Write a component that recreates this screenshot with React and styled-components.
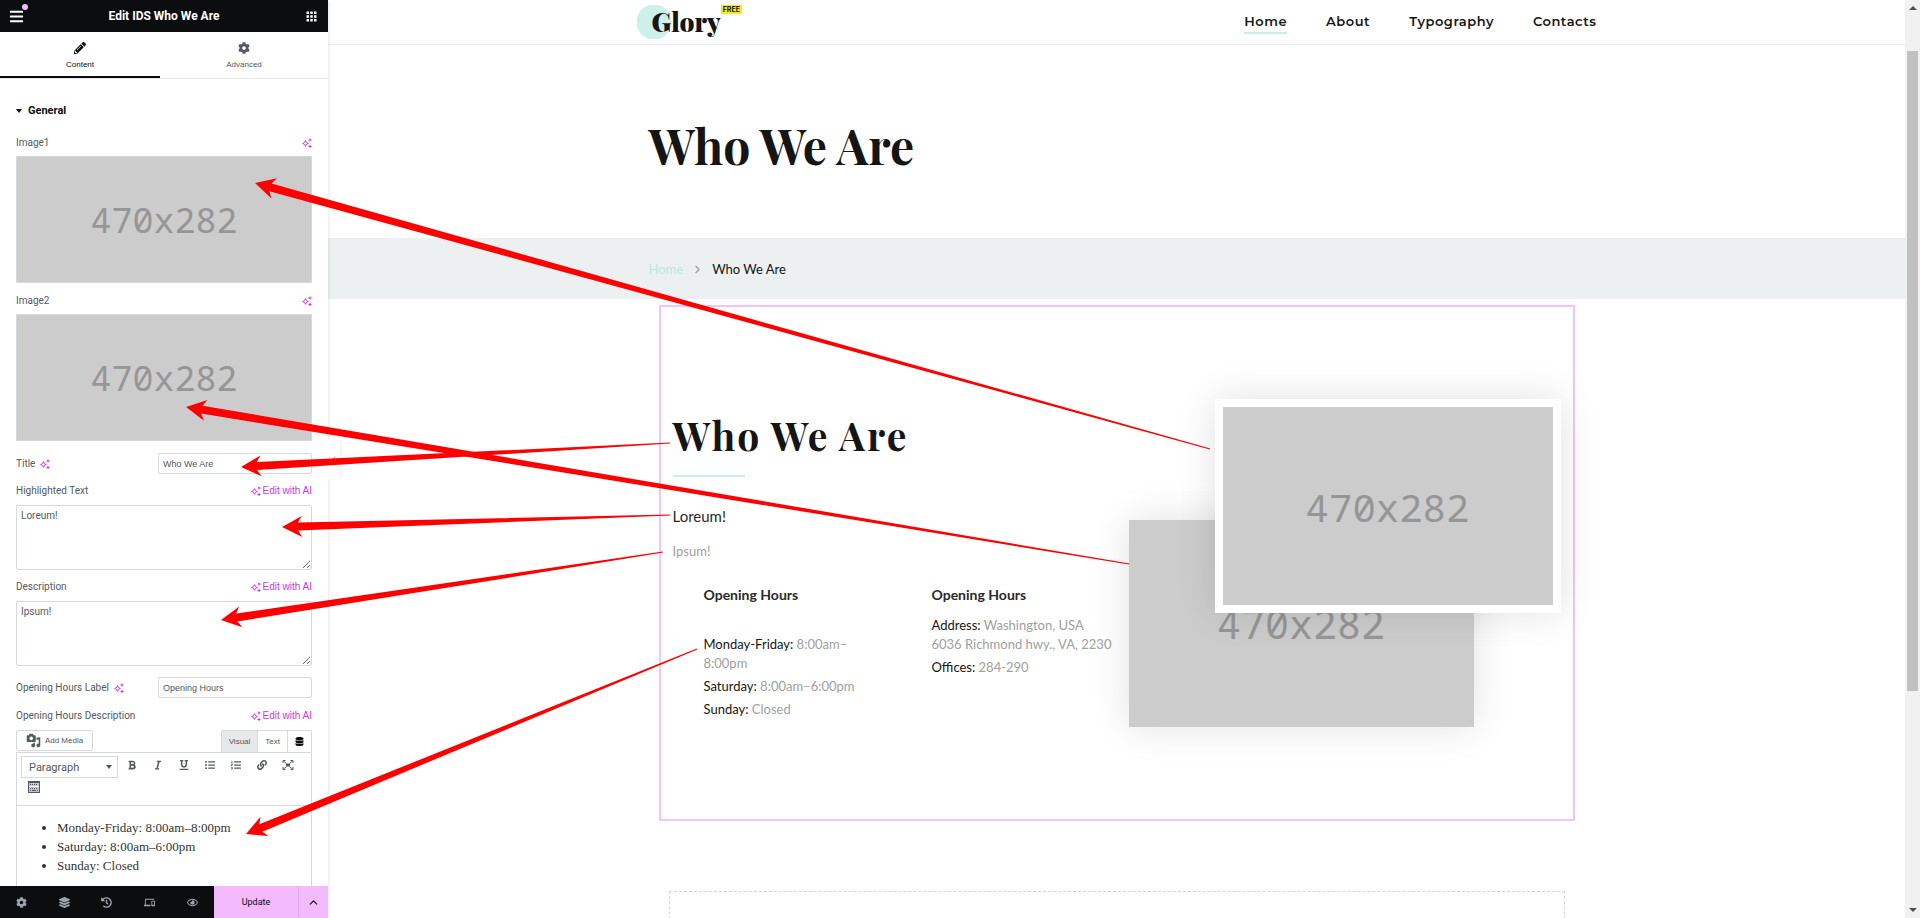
import React, { useState } from 'react';
import styled, { createGlobalStyle } from 'styled-components';
import {
  FaBars,
  FaBold,
  FaCog,
  FaDatabase,
  FaHistory,
  FaItalic,
  FaLayerGroup,
  FaLink,
  FaListOl,
  FaListUl,
  FaPencilAlt,
  FaRegEye,
  FaUnderline,
} from 'react-icons/fa';
import { MdApps, MdDevices } from 'react-icons/md';
import { LuChevronUp, LuChevronRight, LuChevronLeft } from 'react-icons/lu';

const arrows = [
  { from: [1210, 449], to: [255, 183] },
  { from: [1129, 564], to: [186, 407] },
  { from: [670, 443], to: [241, 467] },
  { from: [670, 515], to: [282, 527] },
  { from: [663, 552], to: [221, 620] },
  { from: [697, 649], to: [246, 834] },
];

// tapered arrow: wide at the head, a hairline at the tail
const arrowPoints = ({ from, to }) => {
  const dx = from[0] - to[0];
  const dy = from[1] - to[1];
  const len = Math.hypot(dx, dy);
  const at = (along, side) => [
    to[0] + (dx * along - dy * side) / len,
    to[1] + (dy * along + dx * side) / len,
  ];
  return [
    at(0, 0),
    at(20, -10.5),
    at(16, -4),
    at(len, -0.6),
    at(len, 0.6),
    at(16, 4),
    at(20, 10.5),
  ]
    .map((p) => p.join(','))
    .join(' ');
};

const Sparkle = () => (
  <SparkleSvg viewBox='0 0 10 10' aria-hidden='true'>
    <path
      d='M3.5 2.6 L4.4 4.6 L6.4 5.5 L4.4 6.4 L3.5 8.4 L2.6 6.4 L0.6 5.5 L2.6 4.6 Z'
      fill='none'
      stroke='currentColor'
      strokeWidth='1'
    />
    <path d='M8 0.5v3M6.5 2h3M8 7v3M6.5 8.5h3' stroke='currentColor' />
  </SparkleSvg>
);

const MediaIcon = () => (
  <svg viewBox='0 0 20 20' width='15' height='15' fill='currentColor' aria-hidden='true'>
    <path d='M13 11V4c0-.55-.45-1-1-1h-1.67L9 1H5L3.67 3H2c-.55 0-1 .45-1 1v7c0 .55.45 1 1 1h10c.55 0 1-.45 1-1zM7 4.500c1.380 0 2.500 1.120 2.500 2.500S8.380 9.500 7 9.500 4.500 8.380 4.500 7 5.620 4.500 7 4.500zM14 6h5v10.500c0 1.380-1.120 2.500-2.500 2.500S14 17.880 14 16.500s1.120-2.500 2.500-2.500c.17 0 .34.02.5.05V9h-3V6zm-4 8.050V13h2v3.500c0 1.380-1.120 2.500-2.500 2.500S7 17.880 7 16.500 8.120 14 9.500 14c.17 0 .34.02.5.05z' />
  </svg>
);

const FullscreenIcon = () => (
  <svg viewBox='0 0 12 12' fill='none' stroke='currentColor' aria-hidden='true'>
    <path d='M1 4V1.500H3.500M8.500 1.500H11V4M11 8V10.500H8.500M3.500 10.500H1V8' />
    <path d='M1.500 2L4.500 4.500M10.500 2L7.500 4.500M1.500 10L4.500 7.500M10.500 10L7.500 7.500' />
    <path d='M4 6h4' strokeWidth='3' />
  </svg>
);

const KeyboardIcon = () => (
  <svg viewBox='0 0 12 12' fill='none' stroke='currentColor' aria-hidden='true'>
    <rect x='0.5' y='0.5' width='11' height='11' fill='#c3c7cb' />
    <path d='M0 1.500h12' />
    <path d='M2 3.500h8' strokeDasharray='1 1' />
    <path d='M1 5.500h10' stroke='#fff' />
    <path d='M2 7.500h8' strokeDasharray='1 1' />
    <path d='M2 9.500h1M4 9.500h4M9 9.500h1' />
  </svg>
);

const Placeholder = ({ size }) => (
  <PlaceholderBox $size={size}>470x282</PlaceholderBox>
);

const ImageControl = ({ label }) => (
  <ImageField>
    <FieldHead>
      <span>{label}</span>
      <AiButton type='button' aria-label={`Generate ${label} with AI`}>
        <Sparkle />
      </AiButton>
    </FieldHead>
    <Thumb>
      <Placeholder size={35} />
    </Thumb>
  </ImageField>
);

const TextControl = ({ id, label, value, onChange }) => (
  <InlineField>
    <label htmlFor={id}>{label}</label>
    <AiButton type='button' aria-label={`Write ${label} with AI`}>
      <Sparkle />
    </AiButton>
    <Input id={id} type='text' value={value} onChange={onChange} />
  </InlineField>
);

const AreaControl = ({ id, label, value, onChange }) => (
  <AreaField>
    <FieldHead>
      <label htmlFor={id}>{label}</label>
      <AiButton type='button'>
        <Sparkle />
        Edit with AI
      </AiButton>
    </FieldHead>
    <TextArea id={id} value={value} onChange={onChange} />
  </AreaField>
);

const Editor = () => (
  <EditorField>
    <FieldHead>
      <span>Opening Hours Description</span>
      <AiButton type='button'>
        <Sparkle />
        Edit with AI
      </AiButton>
    </FieldHead>
    <EditorTop>
      <MediaButton type='button'>
        <MediaIcon />
        Add Media
      </MediaButton>
      <EditorTabs>
        <EditorTab type='button' $active>
          Visual
        </EditorTab>
        <EditorTab type='button'>Text</EditorTab>
        <EditorTab type='button' aria-label='Dynamic tags'>
          <FaDatabase />
        </EditorTab>
      </EditorTabs>
    </EditorTop>
    <EditorBox>
      <Toolbar>
        <Format>
          <FormatSelect aria-label='Format' defaultValue='Paragraph'>
            <option>Paragraph</option>
            <option>Heading 1</option>
            <option>Heading 2</option>
          </FormatSelect>
          <Caret />
        </Format>
        <Tool type='button' aria-label='Bold'>
          <FaBold />
        </Tool>
        <Tool type='button' aria-label='Italic'>
          <FaItalic />
        </Tool>
        <Tool type='button' aria-label='Underline'>
          <FaUnderline />
        </Tool>
        <Tool type='button' aria-label='Bulleted list'>
          <FaListUl />
        </Tool>
        <Tool type='button' aria-label='Numbered list'>
          <FaListOl />
        </Tool>
        <Tool type='button' aria-label='Link'>
          <FaLink />
        </Tool>
        <Tool type='button' aria-label='Fullscreen'>
          <FullscreenIcon />
        </Tool>
        <Tool type='button' aria-label='Toolbar toggle'>
          <KeyboardIcon />
        </Tool>
      </Toolbar>
      <EditorList>
        <li>Monday-Friday: 8:00am–8:00pm</li>
        <li>Saturday: 8:00am–6:00pm</li>
        <li>Sunday: Closed</li>
      </EditorList>
    </EditorBox>
  </EditorField>
);

const App = () => {
  const [title, setTitle] = useState('Who We Are');
  const [highlight, setHighlight] = useState('Loreum!');
  const [description, setDescription] = useState('Ipsum!');
  const [hoursLabel, setHoursLabel] = useState('Opening Hours');

  return (
    <>
      <GlobalStyle />
      <Wrapper>
        <Panel>
          <PanelHeader>
            <HeaderButton type='button' aria-label='Menu'>
              <FaBars />
              <Dot />
            </HeaderButton>
            <PanelTitle>Edit IDS Who We Are</PanelTitle>
            <HeaderButton type='button' aria-label='Widgets'>
              <MdApps />
            </HeaderButton>
          </PanelHeader>
          <Tabs>
            <Tab type='button' $active>
              <FaPencilAlt />
              Content
            </Tab>
            <Tab type='button'>
              <FaCog />
              Advanced
            </Tab>
          </Tabs>
          <Controls>
            <SectionTitle>
              <Caret />
              General
            </SectionTitle>
            <ImageControl label='Image1' />
            <ImageControl label='Image2' />
            <TextControl
              id='title'
              label='Title'
              value={title}
              onChange={(e) => setTitle(e.target.value)}
            />
            <AreaControl
              id='highlight'
              label='Highlighted Text'
              value={highlight}
              onChange={(e) => setHighlight(e.target.value)}
            />
            <AreaControl
              id='description'
              label='Description'
              value={description}
              onChange={(e) => setDescription(e.target.value)}
            />
            <TextControl
              id='hours'
              label='Opening Hours Label'
              value={hoursLabel}
              onChange={(e) => setHoursLabel(e.target.value)}
            />
            <Editor />
          </Controls>
          <PanelFooter>
            <FooterTools>
              <FooterButton type='button' aria-label='Settings'>
                <FaCog />
              </FooterButton>
              <FooterButton type='button' aria-label='Navigator'>
                <FaLayerGroup />
              </FooterButton>
              <FooterButton type='button' aria-label='History'>
                <FaHistory />
              </FooterButton>
              <FooterButton type='button' aria-label='Responsive mode'>
                <MdDevices />
              </FooterButton>
              <FooterButton type='button' aria-label='Preview'>
                <FaRegEye />
              </FooterButton>
            </FooterTools>
            <UpdateButton type='button'>Update</UpdateButton>
            <MoreButton type='button' aria-label='Save options'>
              <LuChevronUp />
            </MoreButton>
          </PanelFooter>
          <Collapse type='button' aria-label='Hide panel'>
            <LuChevronLeft />
          </Collapse>
        </Panel>

        <Preview>
          <SiteHeader>
            <SiteHeaderInner>
              <Logo href='#'>
                <LogoText>Glory</LogoText>
                <Free>FREE</Free>
              </Logo>
              <Nav>
                <NavLink href='#' $active>
                  Home
                </NavLink>
                <NavLink href='#'>About</NavLink>
                <NavLink href='#'>Typography</NavLink>
                <NavLink href='#'>Contacts</NavLink>
              </Nav>
            </SiteHeaderInner>
          </SiteHeader>
          <Hero>
            <Container>
              <PageTitle>Who We Are</PageTitle>
            </Container>
          </Hero>
          <Crumbs>
            <CrumbRow>
              <CrumbLink href='#'>Home</CrumbLink>
              <LuChevronRight />
              <span>Who We Are</span>
            </CrumbRow>
          </Crumbs>
          <Widget>
            <Copy>
              <Heading>{title}</Heading>
              <Highlight>{highlight}</Highlight>
              <Text>{description}</Text>
              <Columns>
                <div>
                  <ColumnTitle>{hoursLabel}</ColumnTitle>
                  <Hours $offset>
                    <li>
                      <b>Monday-Friday:</b> 8:00am–8:00pm
                    </li>
                    <li>
                      <b>Saturday:</b> 8:00am–6:00pm
                    </li>
                    <li>
                      <b>Sunday:</b> Closed
                    </li>
                  </Hours>
                </div>
                <div>
                  <ColumnTitle>{hoursLabel}</ColumnTitle>
                  <Hours>
                    <li>
                      <b>Address:</b> Washington, USA
                      <br />
                      6036 Richmond hwy., VA, 2230
                    </li>
                    <li>
                      <b>Offices:</b> 284-290
                    </li>
                  </Hours>
                </div>
              </Columns>
            </Copy>
            <Pictures>
              <BackPicture>
                <Placeholder size={40} />
              </BackPicture>
              <FrontPicture>
                <Placeholder size={39} />
              </FrontPicture>
            </Pictures>
          </Widget>
          <DropArea />
        </Preview>

        <Scrollbar aria-hidden='true'>
          <ScrollArrow />
          <ScrollThumb />
          <ScrollArrow $down />
        </Scrollbar>

        <Arrows aria-hidden='true'>
          {arrows.map((arrow) => (
            <polygon key={arrow.to.join()} points={arrowPoints(arrow)} />
          ))}
        </Arrows>
      </Wrapper>
    </>
  );
};

const GlobalStyle = createGlobalStyle`
  * {
    box-sizing: border-box;
  }

  body {
    margin: 0;
    background: #fff;
    overflow: hidden;
  }

  button {
    display: flex;
    align-items: center;
    justify-content: center;
    margin: 0;
    padding: 0;
    border: 0;
    background: none;
    color: inherit;
    font: inherit;
    cursor: pointer;
  }

  a {
    color: inherit;
    text-decoration: none;
  }
`;

const Wrapper = styled.div`
  position: relative;
  display: flex;
  height: 100vh;
  overflow: hidden;
`;

const Panel = styled.aside`
  position: relative;
  display: flex;
  flex-direction: column;
  flex: none;
  width: 328px;
  background: #fff;
  color: #515962;
  font: 10px/14px Roboto, 'Liberation Sans', sans-serif;
  box-shadow: 0 0 4px rgba(0, 0, 0, 0.15);
`;

const PanelHeader = styled.header`
  display: flex;
  align-items: center;
  justify-content: space-between;
  flex: none;
  height: 32px;
  padding: 0 8px;
  background: #0c0d0e;
  color: #fff;
`;

const HeaderButton = styled.button`
  position: relative;
  width: 16px;
  height: 32px;
  font-size: 15px;
`;

const Dot = styled.span`
  position: absolute;
  top: 4px;
  right: -4px;
  width: 6px;
  height: 6px;
  border-radius: 50%;
  background: #f3bafd;
`;

const PanelTitle = styled.h1`
  margin: 0;
  font-size: 12px;
  font-weight: 700;
`;

const Tabs = styled.div`
  display: grid;
  grid-template-columns: 160fr 168fr;
  flex: none;
  height: 47px;
  border-bottom: 1px solid #e6e8ea;
`;

const Tab = styled.button`
  flex-direction: column;
  gap: 4px;
  padding-top: 5px;
  border-bottom: 2px solid ${(props) => (props.$active ? '#0c0d0e' : 'transparent')};
  color: ${(props) => (props.$active ? '#0c0d0e' : '#515962')};
  font: 8px/14px 'Liberation Sans', Arial, sans-serif;

  svg {
    font-size: 12px;
  }
`;

const Controls = styled.div`
  flex: 1;
  min-height: 0;
  padding: 25px 16px 0;
  overflow: hidden;
`;

const SectionTitle = styled.h2`
  display: flex;
  align-items: center;
  gap: 6px;
  margin: 0 0 18px;
  color: #0c0d0e;
  font-size: 11px;
  font-weight: 700;
  line-height: 14px;
`;

const Caret = styled.span`
  align-self: center;
  border: 3px solid transparent;
  border-top: 4px solid currentColor;
  border-bottom: 0;
  pointer-events: none;
`;

const FieldHead = styled.div`
  display: flex;
  align-items: center;
  justify-content: space-between;
  height: 14px;
`;

const SparkleSvg = styled.svg`
  width: 10px;
  height: 10px;
`;

const AiButton = styled.button`
  gap: 2px;
  color: #d334e0;
  font: 10px/14px 'Liberation Sans', Arial, sans-serif;
`;

const ImageField = styled.div`
  margin-bottom: 11px;
`;

const Thumb = styled.div`
  display: flex;
  height: 127px;
  margin-top: 6px;
  border: 1px solid #d5d8dc;
`;

const PlaceholderBox = styled.div`
  display: flex;
  align-items: center;
  justify-content: center;
  width: 100%;
  height: 100%;
  background: #ccc;
  color: #969696;
  font-family: 'Noto Sans Mono', 'DejaVu Sans Mono', monospace;
  font-size: ${(props) => props.$size}px;
  line-height: 1;
`;

const InlineField = styled.div`
  display: flex;
  align-items: center;
  gap: 5px;
  margin-bottom: 10px;
  padding-top: 1px;
`;

const Input = styled.input`
  width: 154px;
  height: 21px;
  margin-left: auto;
  padding: 0 4px;
  border: 1px solid #d5d8dc;
  border-radius: 2px;
  background: #fff;
  color: #515962;
  font: 9px 'Liberation Sans', Arial, sans-serif;
`;

const AreaField = styled.div`
  margin-bottom: 10px;
`;

const TextArea = styled.textarea`
  display: block;
  width: 100%;
  height: 65px;
  margin-top: 7px;
  padding: 3px 4px;
  border: 1px solid #d5d8dc;
  border-radius: 2px;
  background: #fff;
  color: #515962;
  font: 10px/14px Roboto, sans-serif;
  resize: vertical;
`;

const EditorField = styled.div`
  padding-top: 1px;
`;

const EditorTop = styled.div`
  display: flex;
  align-items: flex-start;
  justify-content: space-between;
  margin-top: 7px;
  font: 8px/14px 'Liberation Sans', Arial, sans-serif;
`;

const MediaButton = styled.button`
  gap: 4px;
  width: 77px;
  height: 21px;
  border: 1px solid #d5d8dc;
  border-radius: 2px;
`;

const EditorTabs = styled.div`
  display: flex;
  border: 1px solid #d5d8dc;
  border-bottom: 0;
  border-radius: 2px 2px 0 0;
`;

const EditorTab = styled.button`
  height: 21px;
  padding: 0 7px;
  background: ${(props) => (props.$active ? '#e6e8ea' : '#fff')};

  & + & {
    border-left: 1px solid #d5d8dc;
  }

  svg {
    color: #0c0d0e;
    font-size: 9px;
  }
`;

const EditorBox = styled.div`
  height: 300px;
  border: 1px solid #d5d8dc;
`;

const Toolbar = styled.div`
  display: flex;
  flex-wrap: wrap;
  align-items: flex-start;
  align-content: flex-start;
  height: 53px;
  padding: 3px 4px;
  border-bottom: 1px solid #d5d8dc;
`;

const Format = styled.div`
  display: grid;
  grid-template-columns: 1fr 12px;
  width: 97px;
  height: 22px;
  margin-right: 1px;

  & > * {
    grid-row: 1;
  }
`;

const FormatSelect = styled.select`
  grid-column: 1 / 3;
  padding: 0 7px;
  border: 1px solid #d5d8dc;
  border-radius: 0;
  background: #fff;
  color: #515962;
  font: 11px Roboto, sans-serif;
  appearance: none;

  & + span {
    grid-column: 2;
    justify-self: start;
  }
`;

const Tool = styled.button`
  width: 26px;
  height: 18px;
  font-size: 10px;

  svg {
    width: 1em;
    height: 1em;
  }

  &:nth-child(n + 8) svg {
    width: 12px;
    height: 12px;
  }
`;

const EditorList = styled.ul`
  margin: 12px 0 0;
  padding-left: 40px;
  color: #333;
  font: 13px/19px 'Liberation Serif', 'Times New Roman', serif;
`;

const PanelFooter = styled.footer`
  display: flex;
  flex: none;
  height: 32px;
  background: #0c0d0e;
`;

const FooterTools = styled.div`
  display: flex;
  flex: 1;
  color: #9da5ae;
`;

const FooterButton = styled.button`
  flex: 1;
  font-size: 11px;
`;

const UpdateButton = styled.button`
  width: 84px;
  background: #f3bafd;
  color: #0c0d0e;
  font-size: 9px;
`;

const MoreButton = styled.button`
  width: 30px;
  border-left: 1px solid #e3a8f0;
  background: #f3bafd;
  color: #0c0d0e;
  font-size: 13px;
`;

const Collapse = styled.button`
  position: absolute;
  top: 439px;
  left: 100%;
  width: 12px;
  height: 40px;
  border-radius: 0 3px 3px 0;
  background: #fff;
  box-shadow: 2px 0 3px rgba(0, 0, 0, 0.06);
  font-size: 8px;
`;

const Preview = styled.main`
  flex: 1;
  min-width: 0;
  overflow: hidden;
  background: #fff;
  color: #151515;
  font-family: Lato, sans-serif;
  font-size: 13px;
`;

const SiteHeader = styled.header`
  height: 45px;
  border-bottom: 1px solid #ebebeb;
`;

const SiteHeaderInner = styled.div`
  display: flex;
  align-items: center;
  justify-content: space-between;
  max-width: 960px;
  height: 44px;
  margin: 0 auto;
`;

const Logo = styled.a`
  display: flex;
  align-items: flex-start;
  height: 34px;
  padding-left: 15px;
  background: radial-gradient(circle at 17px 17px, #cdf1e8 17px, transparent 18px);
`;

const LogoText = styled.span`
  color: #151515;
  font: 900 26px/34px 'Playfair Display', 'Liberation Serif', serif;
`;

const Free = styled.span`
  padding: 0 2px;
  background: #f6e91f;
  font: 700 7px/9px Inter, sans-serif;
`;

const Nav = styled.nav`
  display: flex;
  gap: 39px;
`;

const NavLink = styled.a`
  border-bottom: 2px solid ${(props) => (props.$active ? '#c5f0e5' : 'transparent')};
  font: 600 13px/22px Montserrat, Inter, sans-serif;
  letter-spacing: 0.04em;
`;

const Container = styled.div`
  max-width: 936px;
  margin: 0 auto;
`;

const Hero = styled.section`
  padding: 72px 0 65px;
`;

const PageTitle = styled.h1`
  margin: 0;
  font: 700 48px/56px 'Playfair Display', 'Liberation Serif', serif;
`;

const Crumbs = styled.div`
  padding: 21px 0 19px;
  background: #ecf0f1;
`;

const CrumbRow = styled(Container)`
  display: flex;
  align-items: center;
  gap: 8px;
  line-height: 21px;

  svg {
    color: #999;
    font-size: 13px;
  }
`;

const CrumbLink = styled.a`
  color: #b5ebdd;
`;

const Widget = styled.section`
  display: flex;
  align-items: flex-start;
  max-width: 916px;
  min-height: 516px;
  margin: 6px auto 0;
  padding: 92px 12px 0;
  border: 2px solid #f2c4fb;
`;

const Copy = styled.div`
  flex: 1;
  padding-top: 10px;
`;

const Heading = styled.h2`
  margin: 0;
  font: 700 39px/52px 'Playfair Display', 'Liberation Serif', serif;
  letter-spacing: 2px;

  &::after {
    content: '';
    display: block;
    width: 72px;
    height: 2px;
    margin-top: 14px;
    background: #c5f0e5;
  }
`;

const Highlight = styled.p`
  margin: 29px 0 0;
  color: #292929;
  font-size: 15px;
  line-height: 20px;
`;

const Text = styled.p`
  margin: 15px 0 0;
  color: #a0a0a0;
  line-height: 20px;
`;

const Columns = styled.div`
  display: grid;
  grid-template-columns: 1fr 1fr;
  column-gap: 48px;
  margin: 24px 0 0 31px;
  padding-right: 17px;
`;

const ColumnTitle = styled.h3`
  margin: 0 0 11px;
  color: #292929;
  font-size: 14px;
  font-weight: 700;
  line-height: 20px;
`;

const Hours = styled.ul`
  margin: 0;
  padding: ${(props) => (props.$offset ? '19px 0 0' : '0')};
  color: #a0a0a0;
  line-height: 19px;
  list-style: none;

  li {
    margin-bottom: 4px;
  }

  b {
    color: #151515;
    font-weight: 400;
  }
`;

const Pictures = styled.div`
  display: grid;
  flex: none;
  width: 432px;
  height: 328px;

  & > * {
    grid-area: 1 / 1;
    box-shadow: 0 0 36px rgba(0, 0, 0, 0.12);
  }
`;

const BackPicture = styled.div`
  align-self: end;
  width: 345px;
  height: 207px;
`;

const FrontPicture = styled.div`
  justify-self: end;
  width: 346px;
  height: 214px;
  padding: 8px;
  background: #fff;
`;

const DropArea = styled.div`
  max-width: 896px;
  height: 120px;
  margin: 70px auto 0;
  border: 1px dashed #d5d5d5;
`;

const Scrollbar = styled.div`
  display: flex;
  flex-direction: column;
  align-items: center;
  flex: none;
  width: 15px;
  padding: 6px 0;
  background: #f1f1f1;
`;

const ScrollArrow = styled.span`
  border: 4px solid transparent;
  border-${(props) => (props.$down ? 'top' : 'bottom')}: 4px solid #505050;
  border-${(props) => (props.$down ? 'bottom' : 'top')}: 0;
  margin-top: ${(props) => (props.$down ? 'auto' : '0')};
`;

const ScrollThumb = styled.span`
  width: 11px;
  height: 640px;
  margin-top: 41px;
  background: #c1c1c1;
`;

const Arrows = styled.svg`
  position: absolute;
  top: 0;
  left: 0;
  width: 100%;
  height: 100%;
  fill: #f00;
  pointer-events: none;
`;

export default App;
